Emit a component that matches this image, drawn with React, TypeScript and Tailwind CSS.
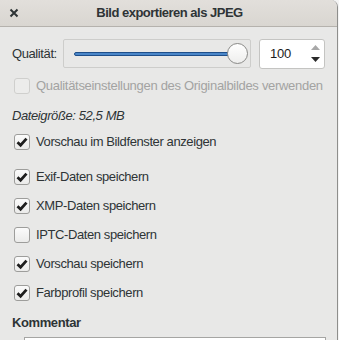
import React from 'react';

const font = { fontFamily: '"Liberation Sans", Arial, sans-serif' };

function Check({ checked, disabled }: { checked?: boolean; disabled?: boolean }) {
  return (
    <span
      className={`flex h-[16px] w-[16px] shrink-0 items-center justify-center rounded-[3px] border ${
        disabled ? 'border-[#cfcfcd] bg-[#ececeb]' : 'border-[#9d9d9b] bg-gradient-to-b from-[#fbfbfb] to-[#ebebea]'
      }`}
    >
      {checked && (
        <svg width="12" height="12" viewBox="0 0 12 12">
          <path d="M1.5 6.2 L4.6 9.2 L10.5 2.6" fill="none" stroke="#1e1e1e" strokeWidth="2.8" strokeLinejoin="miter" />
        </svg>
      )}
    </span>
  );
}

function Row({ label, checked }: { label: string; checked?: boolean }) {
  return (
    <div className="flex h-[29px] items-center gap-[6px] pl-[2px]">
      <Check checked={checked} />
      <span className="whitespace-nowrap text-[13px] tracking-[-0.4px] text-[#2e3436]">{label}</span>
    </div>
  );
}

export default function App() {
  return (
    <div className="h-[340px] w-[339px] overflow-hidden bg-[#f4f4f4]" style={font}>
      <div className="flex h-[340px] w-[338px] flex-col overflow-hidden rounded-tr-[7px] border-r border-[#8e8e8c] bg-[#e8e8e7]">
        <div className="relative flex h-[27px] shrink-0 items-center justify-center border-b border-[#b5b2ad] bg-gradient-to-b from-[#e2dfdb] to-[#d9d6d1]">
          <span className="absolute left-[9px] top-[8px]">
            <svg width="10" height="10" viewBox="0 0 10 10">
              <path d="M1.5 1.5 L8.5 8.5 M8.5 1.5 L1.5 8.5" stroke="#2e3436" strokeWidth="2" />
            </svg>
          </span>
          <span className="pl-[2px] text-[13px] font-bold tracking-[-0.5px] text-[#2e3436]">Bild exportieren als JPEG</span>
        </div>

        <div className="flex flex-col pl-[12px]">
          <div className="mt-[12px] flex h-[29px] items-center">
            <span className="w-[51px] text-[13px] tracking-[-0.4px] text-[#2e3436]">Qualität:</span>
            <div className="relative flex h-[29px] w-[188px] items-center rounded-[2px] border border-[#cdcdcb] pl-[10px]">
              <div className="h-[4px] w-[164px] rounded-[2px] border border-[#1f4f8a] bg-[#4a86c8]" />
              <div className="absolute left-[163px] top-[3px] h-[21px] w-[21px] rounded-full border border-[#8a8a88] bg-gradient-to-b from-[#ffffff] to-[#eeeeed]" />
            </div>
            <div className="relative ml-[8px] flex h-[30px] w-[66px] items-center rounded-[3px] border border-[#c4c4c2] bg-white pl-[10px]">
              <span className="text-[13px] tracking-[-0.2px] text-[#1c1c1c]">100</span>
              <svg className="absolute right-[4px] top-[5px]" width="9" height="5" viewBox="0 0 9 5">
                <path d="M0 5 L4.5 0 L9 5 Z" fill="#a8a8a8" />
              </svg>
              <svg className="absolute right-[4px] bottom-[6px]" width="9" height="5" viewBox="0 0 9 5">
                <path d="M0 0 L9 0 L4.5 5 Z" fill="#2a2a2a" />
              </svg>
            </div>
          </div>

          <div className="mt-[8px] flex h-[20px] items-center gap-[6px] pl-[2px]">
            <Check disabled />
            <span className="whitespace-nowrap text-[13px] tracking-[-0.3px] text-[#a3a3a2]">
              Qualitätseinstellungen des Originalbildes verwenden
            </span>
          </div>

          <div className="mt-[10px] flex h-[20px] items-center">
            <span className="text-[13px] italic tracking-[-0.4px] text-[#2e3436]">Dateigröße: 52,5 MB</span>
          </div>

          <div className="mt-[6px] flex h-[20px] items-center gap-[6px] pl-[2px]">
            <Check checked />
            <span className="whitespace-nowrap text-[13px] tracking-[-0.4px] text-[#2e3436]">Vorschau im Bildfenster anzeigen</span>
          </div>

          <div className="mt-[10px] flex flex-col">
            <Row label="Exif-Daten speichern" checked />
            <Row label="XMP-Daten speichern" checked />
            <Row label="IPTC-Daten speichern" />
            <Row label="Vorschau speichern" checked />
            <Row label="Farbprofil speichern" checked />
          </div>

          <div className="mt-[6px] flex h-[20px] items-center">
            <span className="text-[13px] font-bold tracking-[-0.4px] text-[#2e3436]">Kommentar</span>
          </div>

          <div className="ml-[12px] mt-[4px] h-[40px] w-[302px] shrink-0 border border-[#a5a5a3] bg-white" />
        </div>
      </div>
    </div>
  );
}
